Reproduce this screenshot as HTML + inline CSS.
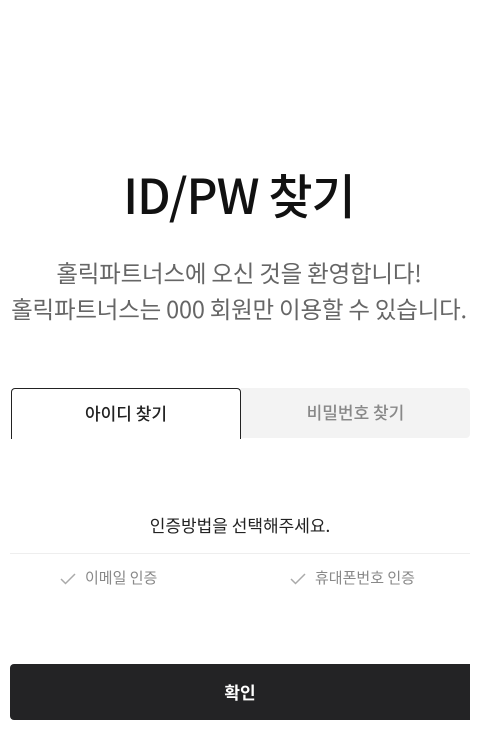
<!DOCTYPE html>
<html><head><meta charset="utf-8"><style>
body{margin:0;width:486px;height:733px;background:#fff;font-family:"Noto Sans CJK KR",sans-serif;position:relative;overflow:hidden}
.a{position:absolute}
.title{left:0;width:478px;top:158px;text-align:center;font-size:48px;font-weight:500;color:#111;line-height:70px;letter-spacing:-1px}
.sub{left:0;width:478px;top:254px;text-align:center;font-size:23.5px;color:#666;line-height:36px;letter-spacing:-0.2px;font-weight:400}
.t1{left:11px;top:388px;width:228px;height:50px;border:1px solid #222;border-bottom:none;border-radius:4px 4px 0 0;text-align:center;line-height:48px;font-size:17px;color:#222;font-weight:500}
.t2{left:241px;top:388px;width:229px;height:50px;background:#f3f3f3;border-radius:0 4px 4px 0;text-align:center;line-height:48px;font-size:17px;color:#888;font-weight:500}
.msg{left:0;width:480px;top:511px;text-align:center;font-size:17px;color:#222;line-height:28px}
.line{left:10px;top:553px;width:460px;height:1px;background:#eee}
.opt{top:566px;font-size:15px;color:#888;line-height:24px}
.btn{left:10px;top:664px;width:460px;height:56px;background:#232325;border-radius:4px 0 0 4px;color:#fff;text-align:center;line-height:56px;font-size:17px;font-weight:bold}
</style></head><body>
<div class="a title">ID/PW 찾기</div>
<div class="a sub">홀릭파트너스에 오신 것을 환영합니다!<br>홀릭파트너스는 000 회원만 이용할 수 있습니다.</div>
<div class="a t1">아이디 찾기</div>
<div class="a t2">비밀번호 찾기</div>
<div class="a msg">인증방법을 선택해주세요.</div>
<div class="a line"></div>
<div class="a opt" style="left:60px"><svg width="16" height="12" viewBox="0 0 16 12" style="vertical-align:middle;margin-right:9px"><path d="M1 6l4.5 4.5L15 1" fill="none" stroke="#aaa" stroke-width="1.5"/></svg>이메일 인증</div>
<div class="a opt" style="left:290px"><svg width="16" height="12" viewBox="0 0 16 12" style="vertical-align:middle;margin-right:9px"><path d="M1 6l4.5 4.5L15 1" fill="none" stroke="#aaa" stroke-width="1.5"/></svg>휴대폰번호 인증</div>
<div class="a btn">확인</div>
</body></html>
